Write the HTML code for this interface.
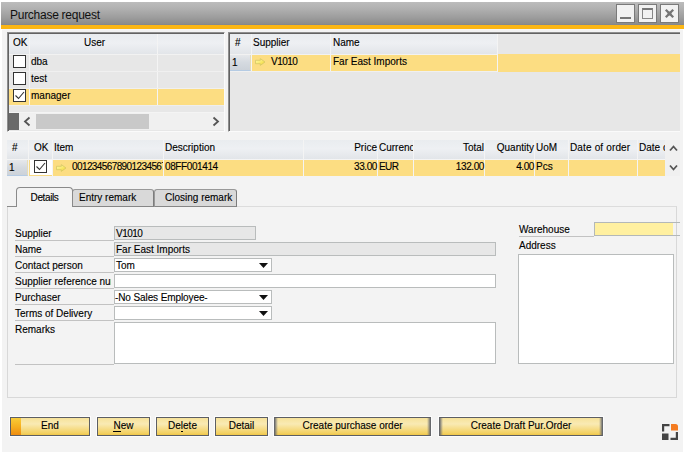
<!DOCTYPE html>
<html><head><meta charset="utf-8"><title>Purchase request</title>
<style>
html,body{margin:0;padding:0;background:#fff;}
body{width:685px;height:454px;position:relative;overflow:hidden;font-family:"Liberation Sans",sans-serif;font-size:10px;color:#000;-webkit-text-stroke:0.12px #000;}
.a{position:absolute;box-sizing:border-box;}
.t{position:absolute;white-space:nowrap;line-height:12px;height:12px;}
#win{left:2px;top:2px;width:681px;height:450px;background:#f3f3f3;}
#title{left:1px;top:2px;width:683px;height:23px;background:linear-gradient(#bcbcbc 0%,#b0b0b0 30%,#9e9e9e 65%,#8c8c8c 95%,#80858e 100%);}
#orange{left:1px;top:25px;width:683px;height:4px;background:#fbb615;}
.wb{top:4px;width:19px;height:19px;background:#f2f2f2;border:1px solid #7a7a7a;}
.hdr{background:linear-gradient(#e9ecef,#eef0f3 45%,#e2e5e9);}
.hl{background:#fcdd82;}
.vd{width:1px;background:#f4f4f4;}
.rn{background:linear-gradient(#e6e8eb,#d5dae0 50%,#ccd2d9);border-bottom:1px solid #b5cbe3;}
.cb{width:13px;height:13px;background:#fff;border:1px solid #333;}
.lbl{height:1px;background:#c2c2c2;left:15px;width:99px;}
.fld{border:1px solid #b9bcbc;height:14px;}
.btn{top:417px;height:19px;border:1px solid #5c5e63;box-shadow:0 0 0 1px #fcfcfc;background:linear-gradient(#f6e29a,#f9eab4 35%,#f3d060 90%,#efc648);text-align:center;line-height:16px;font-size:10px;}
.btn u{text-decoration:none;border-bottom:1px solid #000;display:inline-block;line-height:11px;}
.wide{border-left-color:#66686c;border-right-color:#66686c;}
.wide:before,.wide:after{content:"";position:absolute;top:0;bottom:0;width:3px;}
.wide:before{left:0;background:linear-gradient(to right,rgba(100,102,108,.85),rgba(110,112,118,.35) 60%,rgba(120,120,120,0));}
.wide:after{right:0;background:linear-gradient(to left,rgba(100,102,108,.85),rgba(110,112,118,.35) 60%,rgba(120,120,120,0));}
.tab{background:#d9d9d9;border:1px solid #999;border-right-color:#7c7c7c;border-bottom-color:#868686;border-radius:3px 3px 0 0;top:189px;height:18px;text-align:center;line-height:16px;}
</style></head><body>
<svg width="0" height="0" style="position:absolute"><defs><linearGradient id="ag" x1="0" y1="0" x2="1" y2="1"><stop offset="0" stop-color="#fffbb0"/><stop offset="0.5" stop-color="#f9ea70"/><stop offset="1" stop-color="#efd42a"/></linearGradient></defs></svg>
<div class="a" id="win"></div>
<div class="a" id="title"></div>
<div class="t" style="left:10px;top:8px;font-size:12px;letter-spacing:-0.27px;line-height:14px;height:14px;color:#101010;-webkit-text-stroke:0;">Purchase request</div>
<div class="a" id="orange"></div>
<div class="a" style="left:2px;top:29px;width:681px;height:1px;background:#f7f7fb;"></div>
<!-- window buttons -->
<div class="a wb" style="left:616px;"><div class="a" style="left:3px;top:12px;width:11px;height:2px;background:#777;"></div></div>
<div class="a wb" style="left:638px;"><div class="a" style="left:3px;top:3px;width:11px;height:11px;border:1px solid #888;border-top:2px solid #777;"></div></div>
<div class="a wb" style="left:660px;"><svg class="a" style="left:3px;top:3px" width="11" height="11" viewBox="0 0 11 11"><path d="M1.8 1.8L9.2 9.2M9.2 1.8L1.8 9.2" stroke="#757575" stroke-width="2.3" fill="none"/><rect x="3.6" y="3.6" width="3.8" height="3.8" fill="#757575"/></svg></div>

<!-- left panel -->
<div class="a" style="left:7px;top:32px;width:218px;height:100px;background:#e7e7e7;border-top:1px solid #8e8e8e;border-left:1px solid #8e8e8e;border-right:1px solid #fbfbfb;border-bottom:1px solid #fbfbfb;box-shadow:inset 1px 1px 0 #626262;"></div>
<div class="a hdr" style="left:9px;top:34px;width:215px;height:20px;"></div>
<div class="a hl" style="left:9px;top:89px;width:215px;height:16px;"></div>
<div class="a vd" style="left:29px;top:34px;height:71px;"></div>
<div class="a vd" style="left:157px;top:34px;height:71px;"></div>
<div class="a" style="left:9px;top:54px;width:215px;height:1px;background:#f2f2f2;"></div>
<div class="a" style="left:9px;top:71px;width:215px;height:1px;background:#f0f0f0;"></div>
<div class="a" style="left:9px;top:88px;width:215px;height:1px;background:#f0f0f0;"></div>
<div class="a" style="left:9px;top:105px;width:215px;height:1px;background:#eee;"></div>
<div class="a" style="left:9px;top:112px;width:215px;height:1px;background:#f4f4f4;"></div>
<div class="t" style="left:13px;top:37px;">OK</div>
<div class="t" style="left:84px;top:37px;">User</div>
<div class="a cb" style="left:13px;top:55px;"></div>
<div class="a cb" style="left:13px;top:72px;"></div>
<div class="a cb" style="left:13px;top:89px;"><svg class="a" style="left:0;top:0" width="11" height="11" viewBox="0 0 11 11"><path d="M1.5 5.5L4.5 8.5L10 2" stroke="#333" stroke-width="1.1" fill="none"/></svg></div>
<div class="t" style="left:31px;top:56px;">dba</div>
<div class="t" style="left:31px;top:73px;">test</div>
<div class="t" style="left:31px;top:90px;">manager</div>
<!-- scrollbar -->
<div class="a" style="left:9px;top:113px;width:10px;height:17px;background:#6a6a6a;"></div>
<div class="a" style="left:19px;top:113px;width:205px;height:17px;background:#f0f0f0;"></div>
<div class="a" style="left:36px;top:114px;width:113px;height:15px;background:#c9c9c9;"></div>
<svg class="a" style="left:23px;top:116px" width="8" height="11" viewBox="0 0 8 11"><path d="M6.5 1.5L2 5.5L6.5 9.5" stroke="#555" stroke-width="1.8" fill="none"/></svg>
<svg class="a" style="left:212px;top:116px" width="8" height="11" viewBox="0 0 8 11"><path d="M1.5 1.5L6 5.5L1.5 9.5" stroke="#555" stroke-width="1.8" fill="none"/></svg>

<!-- right panel -->
<div class="a" style="left:228px;top:32px;width:452px;height:100px;background:#e7e7e7;border-top:1px solid #8e8e8e;border-left:1px solid #8e8e8e;border-bottom:1px solid #fbfbfb;box-shadow:inset 1px 1px 0 #626262;"></div>
<div class="a hdr" style="left:230px;top:34px;width:267px;height:20px;"></div>
<div class="a hl" style="left:252px;top:55px;width:245px;height:16px;"></div>
<div class="a hl" style="left:498px;top:54px;width:182px;height:18px;"></div>
<div class="a" style="left:230px;top:54px;width:267px;height:1px;background:#f2f2f2;"></div>
<div class="a" style="left:230px;top:71px;width:267px;height:1px;background:#f0f0f0;"></div>
<div class="a rn" style="left:230px;top:55px;width:21px;height:16px;border-right:1px solid #e6dcb6;"></div>
<div class="a vd" style="left:251px;top:34px;height:37px;"></div>
<div class="a vd" style="left:330px;top:34px;height:37px;"></div>
<div class="a vd" style="left:497px;top:34px;height:38px;"></div>
<div class="t" style="left:235px;top:37px;">#</div>
<div class="t" style="left:253px;top:37px;">Supplier</div>
<div class="t" style="left:333px;top:37px;">Name</div>
<div class="t" style="left:232px;top:57px;">1</div>
<svg class="a" style="left:255px;top:58px" width="11" height="9" viewBox="0 0 11 9"><path d="M0.5 2.3H5.3V0.6L10 4L5.3 7.4V5.7H0.5Z" fill="url(#ag)" stroke="#d6c666" stroke-width="0.8"/></svg>
<div class="t" style="left:271px;top:56px;letter-spacing:-0.5px;">V1010</div>
<div class="t" style="left:333px;top:56px;">Far East Imports</div>

<!-- middle grid -->
<div class="a hdr" style="left:7px;top:140px;width:658px;height:19px;"></div>
<div class="a" style="left:7px;top:159px;width:658px;height:1px;background:#f4f4f4;"></div>
<div class="a" style="left:665px;top:140px;width:15px;height:36px;background:#f0f0f0;"></div>
<div class="a hl" style="left:53px;top:160px;width:612px;height:16px;"></div>
<div class="a rn" style="left:7px;top:160px;width:21px;height:16px;border-right:1px solid #e6dcb6;"></div>
<div class="a" style="left:29px;top:160px;width:24px;height:16px;background:#fff;border-left:1px solid #f8d984;border-bottom:1px solid #f8d984;"></div>
<div class="a vd" style="left:28px;top:140px;height:20px;"></div>
<div class="a vd" style="left:52px;top:140px;height:36px;"></div>
<div class="a vd" style="left:163px;top:140px;height:36px;"></div>
<div class="a vd" style="left:303px;top:140px;height:36px;"></div>
<div class="a vd" style="left:377px;top:140px;height:36px;"></div>
<div class="a vd" style="left:413px;top:140px;height:36px;"></div>
<div class="a vd" style="left:484px;top:140px;height:36px;"></div>
<div class="a vd" style="left:534px;top:140px;height:36px;"></div>
<div class="a vd" style="left:568px;top:140px;height:36px;"></div>
<div class="a vd" style="left:637px;top:140px;height:36px;"></div>
<div class="t" style="left:12px;top:142px;">#</div>
<div class="t" style="left:34px;top:142px;">OK</div>
<div class="t" style="left:54px;top:142px;">Item</div>
<div class="t" style="left:165px;top:142px;">Description</div>
<div class="t" style="right:308px;top:142px;">Price</div>
<div class="a" style="left:379px;top:142px;width:34px;height:14px;overflow:hidden;"><div class="t" style="left:0;top:0;">Currency</div></div>
<div class="t" style="right:201px;top:142px;">Total</div>
<div class="t" style="right:151px;top:142px;">Quantity</div>
<div class="t" style="left:536px;top:142px;">UoM</div>
<div class="t" style="left:570px;top:142px;letter-spacing:0.15px;">Date of order</div>
<div class="a" style="left:639px;top:142px;width:26px;height:14px;overflow:hidden;"><div class="t" style="left:0;top:0;">Date of delivery</div></div>
<div class="t" style="left:9px;top:162px;">1</div>
<div class="a cb" style="left:34px;top:160px;"><svg class="a" style="left:0;top:0" width="11" height="11" viewBox="0 0 11 11"><path d="M1.5 5.5L4.5 8.5L10 2" stroke="#333" stroke-width="1.1" fill="none"/></svg></div>
<svg class="a" style="left:56px;top:164px" width="11" height="9" viewBox="0 0 11 9"><path d="M0.5 2.3H5.3V0.6L10 4L5.3 7.4V5.7H0.5Z" fill="url(#ag)" stroke="#d6c666" stroke-width="0.8"/></svg>
<div class="a" style="left:72px;top:161px;width:91px;height:14px;overflow:hidden;"><div class="t" style="left:0;top:0;letter-spacing:-0.6px;">0012345678901234567</div></div>
<div class="t" style="left:165px;top:161px;letter-spacing:-0.4px;">08FF001414</div>
<div class="t" style="right:308px;top:161px;letter-spacing:-0.4px;">33.00</div>
<div class="t" style="left:379px;top:161px;letter-spacing:-0.6px;">EUR</div>
<div class="t" style="right:201px;top:161px;letter-spacing:-0.4px;">132.00</div>
<div class="t" style="right:151px;top:161px;letter-spacing:-0.4px;">4.00</div>
<div class="t" style="left:536px;top:161px;">Pcs</div>
<svg class="a" style="left:669px;top:144px" width="9" height="8" viewBox="0 0 9 8"><path d="M1 6.5L4.5 2.5L8 6.5" stroke="#555" stroke-width="1.8" fill="none"/></svg>
<svg class="a" style="left:669px;top:164px" width="9" height="8" viewBox="0 0 9 8"><path d="M1 1.5L4.5 5.5L8 1.5" stroke="#555" stroke-width="1.8" fill="none"/></svg>

<!-- tab panel -->
<div class="a" style="left:7px;top:206px;width:670px;height:192px;border:1px solid #d8d8d8;border-top:1px solid #dcdcdc;"></div>
<div class="a" style="left:7px;top:206px;width:230px;height:1px;background:#8a8a8a;"></div>
<div class="a tab" style="left:72px;width:82px;text-align:left;padding-left:6px;">Entry remark</div>
<div class="a tab" style="left:154px;width:83px;text-align:left;padding-left:10px;">Closing remark</div>
<div class="a" style="left:16px;top:187px;width:57px;height:20px;background:#f3f3f3;border:1px solid #8a8a8a;border-bottom:none;border-radius:4px 4px 0 0;text-align:center;line-height:20px;letter-spacing:-0.4px;">Details</div>

<!-- form -->
<div class="t" style="left:15px;top:228px;">Supplier</div><div class="a lbl" style="top:240px;"></div>
<div class="t" style="left:15px;top:244px;">Name</div><div class="a lbl" style="top:256px;"></div>
<div class="t" style="left:15px;top:260px;">Contact person</div><div class="a lbl" style="top:272px;"></div>
<div class="a" style="left:15px;top:276px;width:96px;height:12px;overflow:hidden;"><div class="t" style="left:0;top:0;">Supplier reference number</div></div><div class="a lbl" style="top:288px;"></div>
<div class="t" style="left:15px;top:292px;">Purchaser</div><div class="a lbl" style="top:304px;"></div>
<div class="t" style="left:15px;top:308px;">Terms of Delivery</div><div class="a lbl" style="top:320px;"></div>
<div class="t" style="left:15px;top:324px;">Remarks</div><div class="a lbl" style="top:364px;"></div>

<div class="a fld" style="left:114px;top:226px;width:142px;background:#e7e7e7;"></div>
<div class="t" style="left:116px;top:228px;letter-spacing:-0.5px;">V1010</div>
<div class="a fld" style="left:114px;top:242px;width:382px;background:#e7e7e7;"></div>
<div class="t" style="left:116px;top:244px;">Far East Imports</div>
<div class="a fld" style="left:114px;top:258px;width:158px;background:#fff;"></div>
<div class="t" style="left:116px;top:260px;">Tom</div>
<div class="a fld" style="left:114px;top:274px;width:382px;background:#fff;"></div>
<div class="a fld" style="left:114px;top:290px;width:158px;background:#fff;"></div>
<div class="t" style="left:115px;top:292px;letter-spacing:-0.1px;">-No Sales Employee-</div>
<div class="a fld" style="left:114px;top:306px;width:158px;background:#fff;"></div>
<div class="a fld" style="left:114px;top:322px;width:382px;height:42px;background:#fff;"></div>
<svg class="a" style="left:259px;top:263px" width="9" height="5" viewBox="0 0 9 5"><path d="M0 0H9L4.5 5Z" fill="#111"/></svg>
<svg class="a" style="left:259px;top:295px" width="9" height="5" viewBox="0 0 9 5"><path d="M0 0H9L4.5 5Z" fill="#111"/></svg>
<svg class="a" style="left:259px;top:311px" width="9" height="5" viewBox="0 0 9 5"><path d="M0 0H9L4.5 5Z" fill="#111"/></svg>

<div class="t" style="left:519px;top:224px;">Warehouse</div>
<div class="a" style="left:519px;top:236px;width:75px;height:1px;background:#c2c2c2;"></div>
<div class="a" style="left:594px;top:222px;width:86px;height:14px;border-top:1px solid #b3b8b8;border-bottom:1px solid #b3b8b8;border-left:1px solid #b3b8b8;"></div>
<div class="a" style="left:595px;top:223px;width:78px;height:12px;background:#fff0a0;"></div>
<div class="a" style="left:676px;top:223px;width:1px;height:12px;background:#d4d4d4;"></div>
<div class="t" style="left:519px;top:240px;">Address</div>
<div class="a" style="left:518px;top:254px;width:156px;height:110px;background:#fff;border:1px solid #b9bcbc;"></div>

<!-- buttons -->
<div class="a btn" style="left:10px;width:80px;">End<div class="a" style="left:0;top:0;width:10px;height:17px;background:linear-gradient(#f8cc38,#f6b020 50%,#ee8c10);"></div></div>
<div class="a btn" style="left:97px;width:53px;"><u>N</u>ew</div>
<div class="a btn" style="left:156px;width:53px;">De<u>l</u>ete</div>
<div class="a btn" style="left:215px;width:53px;">Detail</div>
<div class="a btn wide" style="left:274px;width:157px;">Create purchase order</div>
<div class="a btn wide" style="left:439px;width:164px;">Create Draft Pur.Order</div>

<!-- resize icon -->
<svg class="a" style="left:662px;top:424px" width="16" height="16" viewBox="0 0 16 16">
<path d="M0 0H7.5V2.2H2.2V7.5H0Z" fill="#444"/>
<path d="M9 0H13.5A2.5 2.5 0 0 1 16 2.5V6.5H9Z" fill="#f47b20"/>
<rect x="0" y="9.5" width="6.5" height="6.5" fill="#444"/>
<path d="M16 8V16H8.5V13.8H13.8V8Z" fill="#444"/>
</svg>
</body></html>
